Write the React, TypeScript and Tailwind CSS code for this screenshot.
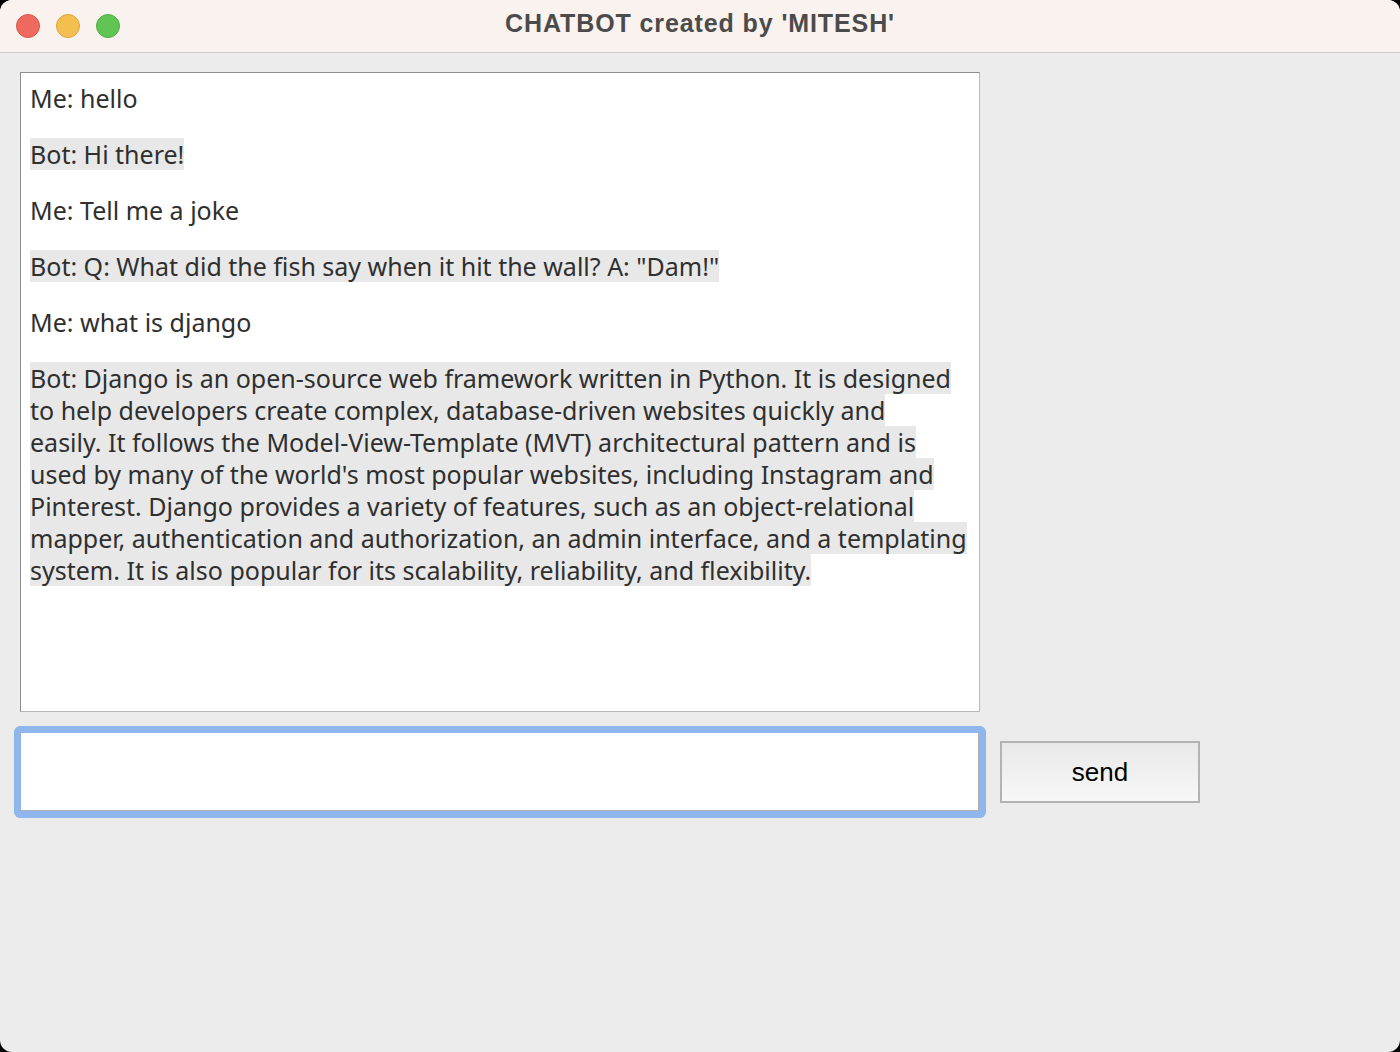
const MESSAGES: { who: "me" | "bot"; lines: string[] }[] = [
  { who: "me", lines: ["Me: hello"] },
  { who: "bot", lines: ["Bot: Hi there!"] },
  { who: "me", lines: ["Me: Tell me a joke"] },
  { who: "bot", lines: ['Bot: Q: What did the fish say when it hit the wall? A: "Dam!"'] },
  { who: "me", lines: ["Me: what is django"] },
  {
    who: "bot",
    lines: [
      "Bot: Django is an open-source web framework written in Python. It is designed",
      "to help developers create complex, database-driven websites quickly and",
      "easily. It follows the Model-View-Template (MVT) architectural pattern and is",
      "used by many of the world's most popular websites, including Instagram and",
      "Pinterest. Django provides a variety of features, such as an object-relational",
      "mapper, authentication and authorization, an admin interface, and a templating",
      "system. It is also popular for its scalability, reliability, and flexibility.",
    ],
  },
];

function TrafficLights() {
  return (
    <div className="flex items-center gap-4 pl-4">
      <span className="w-6 h-6 rounded-full bg-[#ee6a5f] border border-[#d8584d]" />
      <span className="w-6 h-6 rounded-full bg-[#f5bf4f] border border-[#d9a53b]" />
      <span className="w-6 h-6 rounded-full bg-[#61c554] border border-[#4fae43]" />
    </div>
  );
}

export default function App() {
  return (
    <div className="w-[1400px] h-[1052px] bg-black">
      <div className="w-full h-full rounded-[12px] overflow-hidden bg-[#ececec] flex flex-col">
        {/* title bar */}
        <div className="relative h-[53px] shrink-0 bg-[#faf2ef] border-b border-[#d0cfcf] flex items-center">
          <TrafficLights />
          <div className="absolute inset-x-0 top-0 h-[47px] flex items-center justify-center pointer-events-none">
            <span className="font-['Liberation_Sans',sans-serif] font-bold text-[25px] text-[#4b4b4b] tracking-[0.9px]">
              CHATBOT created by 'MITESH'
            </span>
          </div>
        </div>

        {/* body */}
        <div className="flex flex-col pt-[19px]">
          <div className="ml-[20px] w-[960px] h-[640px] overflow-hidden bg-white border border-t-[#8e8e8e] border-l-[#8e8e8e] border-r-[#b8b8b8] border-b-[#b8b8b8] pt-[9px] pl-[9px] flex flex-col gap-[24px] font-['Noto_Sans',sans-serif] text-[25px] text-[#2f2f2f]">
            {MESSAGES.map((m, i) => (
              <div key={i} className="flex flex-col">
                {m.lines.map((l, j) => (
                  <div
                    key={j}
                    className={
                      m.who === "bot"
                        ? "w-fit h-[32px] leading-[32px] whitespace-pre bg-[#e8e8e8]"
                        : "w-fit h-[32px] leading-[32px] whitespace-pre"
                    }
                  >
                    {l}
                  </div>
                ))}
              </div>
            ))}
          </div>

          <div className="mt-[14px] ml-[14px] flex items-start gap-[14px]">
            <div className="w-[972px] h-[92px] rounded-[6px] bg-[#8fb7ee] p-[7px]">
              <div className="w-full h-full bg-white border-b border-r border-[#b0b0b0]" />
            </div>
            <button
              type="button"
              className="mt-[15px] w-[200px] h-[62px] border-2 border-[#b3b3b3] bg-gradient-to-b from-[#e9e9e9] to-[#f7f7f7] font-['Liberation_Sans',sans-serif] text-[26px] text-black"
            >
              send
            </button>
          </div>
        </div>
      </div>
    </div>
  );
}
